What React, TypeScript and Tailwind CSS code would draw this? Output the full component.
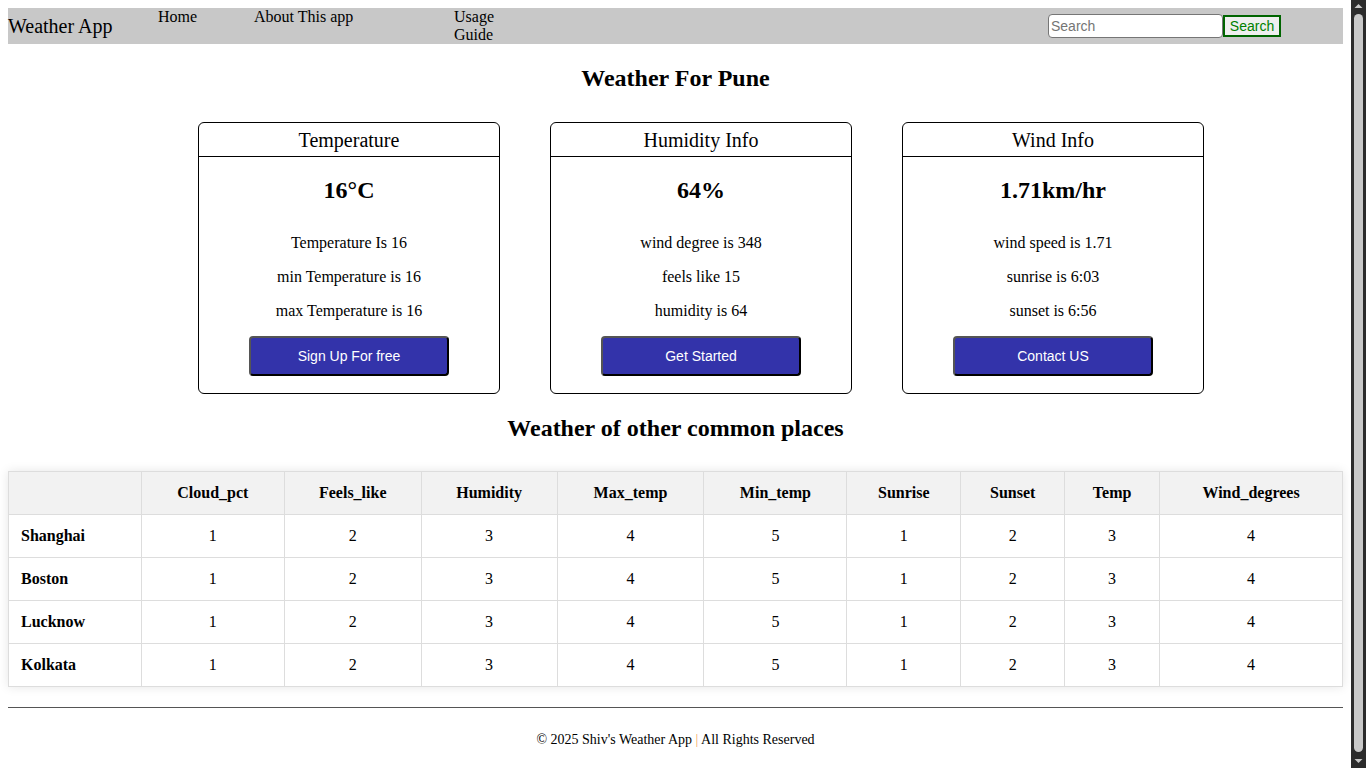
import React from "react";

const serif = { fontFamily: '"Liberation Serif", "Times New Roman", serif' };
const sans = { fontFamily: '"Liberation Sans", Arial, sans-serif' };

type Card = { title: string; big: string; lines: string[]; btn: string };

const cards: Card[] = [
  {
    title: "Temperature",
    big: "16°C",
    lines: ["Temperature Is 16", "min Temperature is 16", "max Temperature is 16"],
    btn: "Sign Up For free",
  },
  {
    title: "Humidity Info",
    big: "64%",
    lines: ["wind degree is 348", "feels like 15", "humidity is 64"],
    btn: "Get Started",
  },
  {
    title: "Wind Info",
    big: "1.71km/hr",
    lines: ["wind speed is 1.71", "sunrise is 6:03", "sunset is 6:56"],
    btn: "Contact US",
  },
];

const cols = [
  { name: "", w: 133 },
  { name: "Cloud_pct", w: 143 },
  { name: "Feels_like", w: 137 },
  { name: "Humidity", w: 136 },
  { name: "Max_temp", w: 147 },
  { name: "Min_temp", w: 143 },
  { name: "Sunrise", w: 114 },
  { name: "Sunset", w: 104 },
  { name: "Temp", w: 95 },
  { name: "Wind_degrees", w: 183 },
];

const cities = ["Shanghai", "Boston", "Lucknow", "Kolkata"];
const vals = ["1", "2", "3", "4", "5", "1", "2", "3", "4"];

function FakeScrollbar() {
  return (
    <div className="fixed top-0 right-0 h-screen w-[15px] bg-[#2b2b2b] flex flex-col items-center">
      <svg width="15" height="12" viewBox="0 0 15 12" className="shrink-0">
        <polygon points="3.5,8 7.5,4 11.5,8" fill="#c8c8c8" />
      </svg>
      <div className="flex-1 w-[9px] rounded-[5px] bg-[#c8c8c8] my-[2px]" />
      <svg width="15" height="14" viewBox="0 0 15 14" className="shrink-0">
        <polygon points="3.5,5 7.5,9 11.5,5" fill="#c8c8c8" />
      </svg>
    </div>
  );
}

export default function App() {
  return (
    <div className="m-0 w-[1351px] p-[8px] pb-[20px] text-black bg-white" style={serif}>
      {/* Navbar */}
      <nav className="flex items-center h-[36px] bg-[#c8c8c8]">
        <div className="w-[150px] text-[20px] leading-[24px] self-center">Weather App</div>
        <ul className="flex self-start text-[16px] leading-[18px] list-none m-0 p-0">
          <li className="w-[96px]">Home</li>
          <li className="w-[200px]">About This app</li>
          <li className="w-[50px]">Usage Guide</li>
        </ul>
        <form
          className="ml-auto mr-[62px] flex items-center"
          onSubmit={(e) => e.preventDefault()}
        >
          <input
            type="text"
            placeholder="Search"
            className="w-[175px] h-[24px] px-[2px] border border-[#767676] rounded-[4px] bg-white text-[14px] placeholder:text-[#757575] outline-none"
            style={sans}
          />
          <button
            type="submit"
            className="h-[22px] w-[58px] border-2 border-[#006400] bg-[#efefef] text-[#008000] text-[14px] leading-[16px]"
            style={sans}
          >
            Search
          </button>
        </form>
      </nav>

      <h2 className="mt-[20px] mb-[30px] text-center text-[24px] leading-[28px] font-bold">
        Weather For Pune
      </h2>

      {/* Cards */}
      <div className="flex gap-[50px] pl-[190px]">
        {cards.map((c) => (
          <div
            key={c.title}
            className="w-[302px] h-[272px] border border-black rounded-[6px] flex flex-col"
          >
            <div className="h-[34px] border-b border-black flex items-center justify-center text-[20px] leading-[24px]">
              {c.title}
            </div>
            <div className="flex flex-col items-center pt-[19px]">
              <div className="text-[24px] leading-[28px] font-bold">{c.big}</div>
              <div className="mt-[30px] flex flex-col items-center gap-[16px] text-[16px] leading-[18px]">
                {c.lines.map((l) => (
                  <p key={l}>{l}</p>
                ))}
              </div>
              <button
                className="mt-[16px] w-[200px] h-[40px] bg-[#3333aa] text-white text-[14px] leading-[16px] rounded-[4px] border-2 border-t-[#555] border-l-[#555] border-b-black border-r-black"
                style={sans}
              >
                {c.btn}
              </button>
            </div>
          </div>
        ))}
      </div>

      <h2 className="mt-[20px] mb-[29px] text-center text-[24px] leading-[28px] font-bold">
        Weather of other common places
      </h2>

      {/* Table */}
      <table className="w-full border-collapse shadow-[0_0_10px_rgba(0,0,0,0.1)] text-[16px] leading-[18px]">
        <thead>
          <tr className="bg-[#f2f2f2]">
            {cols.map((c, i) => (
              <th
                key={i}
                className="border border-[#dddddd] p-[12px] font-bold text-center"
                style={{ width: c.w }}
              >
                {c.name}
              </th>
            ))}
          </tr>
        </thead>
        <tbody>
          {cities.map((city) => (
            <tr key={city}>
              <th className="border border-[#dddddd] p-[12px] font-bold text-left">{city}</th>
              {vals.map((v, i) => (
                <td key={i} className="border border-[#dddddd] p-[12px] text-center">
                  {v}
                </td>
              ))}
            </tr>
          ))}
        </tbody>
      </table>

      <hr className="mt-[20px] border-0 border-t border-[#555]" />

      <footer className="pt-[24px] pb-[20px] text-center text-[14px] leading-[16px]">
        © 2025 Shiv's Weather App <span className="text-[#f4a460]">|</span> All Rights Reserved
      </footer>

      <FakeScrollbar />
    </div>
  );
}
